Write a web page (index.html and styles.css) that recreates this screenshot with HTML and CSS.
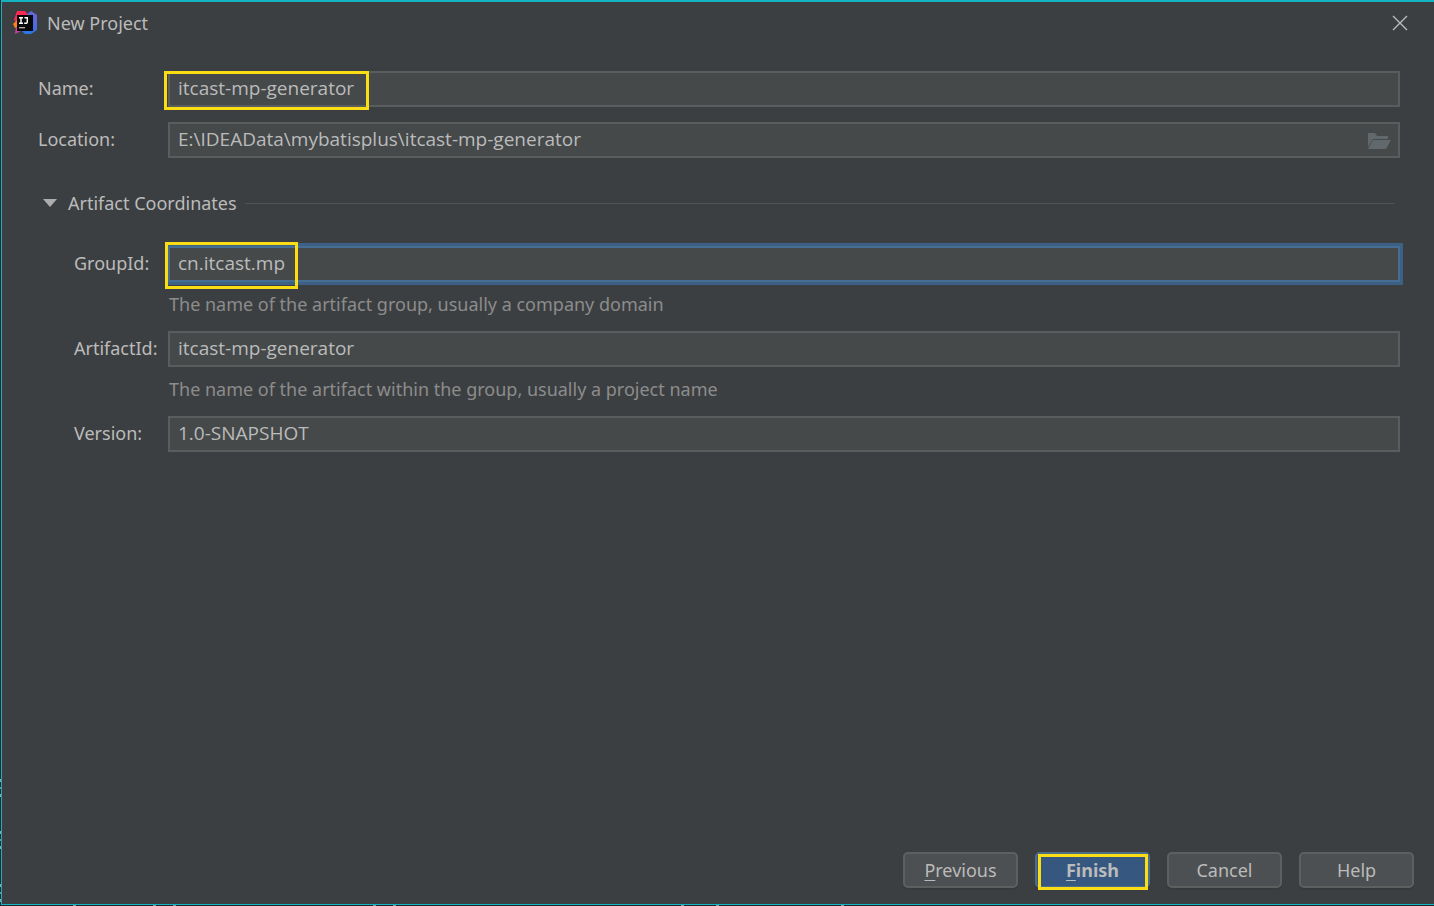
FILE: index.html
```html
<!DOCTYPE html>
<html lang="en">
<head>
<meta charset="utf-8">
<title>New Project</title>
<link rel="stylesheet" href="styles.css">
</head>
<body>
<main class="dialog">
  <header class="titlebar">
    <svg class="logo" viewBox="0 0 24 24" aria-hidden="true">
      <defs>
        <linearGradient id="blue" x1="0" y1="1" x2="1" y2="0"><stop offset="0" stop-color="#1b7fe8"/><stop offset="0.5" stop-color="#3b6fe6"/><stop offset="1" stop-color="#7b62d3"/></linearGradient>
        <linearGradient id="purple" x1="0" y1="0" x2="1" y2="1"><stop offset="0" stop-color="#f0407a"/><stop offset="1" stop-color="#8b3fd8"/></linearGradient>
      </defs>
      <path fill="url(#blue)" d="M14 3 18 0 24 4V19L18 23H12L9 20V8Z"/>
      <path fill="#fe2857" d="M4 0H12L15 4 8 14 1 9Z"/>
      <path fill="#fc801d" d="M0 13 4 9 6 16 2 17Z"/>
      <path fill="url(#purple)" d="M3 16H12L8 20 2 23Z"/>
      <path fill="#080808" d="M4 4H20V20H4Z"/>
      <path stroke="#fff" stroke-width="1.4" fill="none" d="M6 6.7H10M8 6.7V12.3M6 12.3H10M11.5 6.7H14.3V11Q14.3 12.5 12 12.3H11.2"/>
      <path fill="#aaa" d="M6 16H12V17.4H6Z"/>
    </svg>
    <h1 class="title">New Project</h1>
    <button class="close" type="button" aria-label="Close">
      <svg viewBox="0 0 16 16" aria-hidden="true"><path d="M1 1 15 15M15 1 1 15"/></svg>
    </button>
  </header>
  <form class="form">
    <div class="row">
      <label class="label" for="name">Name:</label>
      <div class="field"><input class="input" id="name" type="text" value="itcast-mp-generator"><span class="mark mark-name"></span></div>
    </div>
    <div class="row">
      <label class="label" for="location">Location:</label>
      <div class="field">
        <input class="input input-browse" id="location" type="text" value="E:\IDEAData\mybatisplus\itcast-mp-generator">
        <button class="browse" type="button" aria-label="Browse">
          <svg viewBox="0 0 24 18" aria-hidden="true"><path d="M1 15V1H8L10 4H21V7H6Z"/><path d="M6 8H24L19 17H1Z"/></svg>
        </button>
      </div>
    </div>
    <div class="group" role="group" aria-labelledby="section-title">
      <button class="section" type="button" aria-expanded="true">
        <svg class="arrow" viewBox="0 0 14 8" aria-hidden="true"><path d="M0 0H14L7 8Z"/></svg>
        <span id="section-title">Artifact Coordinates</span>
        <span class="rule"></span>
      </button>
      <div class="row nested">
        <label class="label" for="group">GroupId:</label>
        <div class="field"><input class="input focused" id="group" type="text" value="cn.itcast.mp" aria-describedby="group-hint"><span class="mark mark-group"></span></div>
      </div>
      <p class="hint" id="group-hint">The name of the artifact group, usually a company domain</p>
      <div class="row nested">
        <label class="label" for="artifact">ArtifactId:</label>
        <div class="field"><input class="input" id="artifact" type="text" value="itcast-mp-generator" aria-describedby="artifact-hint"></div>
      </div>
      <p class="hint" id="artifact-hint">The name of the artifact within the group, usually a project name</p>
      <div class="row nested">
        <label class="label" for="version">Version:</label>
        <div class="field"><input class="input" id="version" type="text" value="1.0-SNAPSHOT"></div>
      </div>
    </div>
  </form>
  <footer class="actions">
    <button class="button" type="button"><u>P</u>revious</button>
    <button class="button primary" type="button"><u>F</u>inish<span class="mark mark-finish"></span></button>
    <button class="button" type="button">Cancel</button>
    <button class="button" type="button">Help</button>
  </footer>
</main>
</body>
</html>
```
FILE: styles.css
```css
* { box-sizing: border-box; }

body {
  /* slivers of the editor text behind the dialog's left edge */
  --sliver: linear-gradient(#a0a0a0 3px, transparent 3px 8px, #8a8a8a 8px 10px, transparent 10px 15px, #a0a0a0 15px);
  --dot: linear-gradient(#7f9a9c, #7f9a9c);
  margin: 0;
  padding: 0 0 1px 1px;
  min-height: 100vh;
  display: flex;
  background:
    var(--sliver) 0 calc(100% - 4px) / 1px 18px no-repeat,
    var(--sliver) 0 calc(100% - 57px) / 1px 18px no-repeat,
    var(--sliver) 0 calc(100% - 109px) / 1px 18px no-repeat,
    var(--dot) 73px 100% / 3px 1px no-repeat,
    var(--dot) 153px 100% / 3px 1px no-repeat,
    var(--dot) 173px 100% / 3px 1px no-repeat,
    var(--dot) 373px 100% / 3px 1px no-repeat,
    var(--dot) 393px 100% / 3px 1px no-repeat,
    var(--dot) 681px 100% / 3px 1px no-repeat,
    var(--dot) 716px 100% / 3px 1px no-repeat,
    var(--dot) 841px 100% / 3px 1px no-repeat,
    #222628;
  color: #bbbbbb;
  font: 18px/24px "Noto Sans", "Open Sans", sans-serif;
}

button, input { font: inherit; color: inherit; }

button { padding: 0; border: 0; background: none; }

svg { display: block; }

.dialog {
  flex: 1;
  display: flex;
  flex-direction: column;
  background: #3c3f41;
  border: solid #13b3c1;
  border-width: 2px 0 1px 1px;
}

.titlebar {
  display: flex;
  align-items: center;
  height: 42px;
  padding: 0 26px 0 11px;
}

.logo { width: 24px; height: 24px; }

.title { flex: 1; margin: 0 0 0 10px; font-size: 18px; font-weight: 400; }

.close svg { width: 16px; height: 16px; stroke: #bbbbbb; stroke-width: 1.4; fill: none; }

.form { padding: 27px 34px 0 36px; }

.row { display: flex; align-items: center; margin-bottom: 15px; }

.label { flex: none; width: 130px; padding-bottom: 2px; }

.field { position: relative; flex: 1; display: flex; }

.input {
  width: 100%;
  height: 36px;
  padding: 0 8px 2px;
  border: 2px solid #5a5d5e;
  border-radius: 0;
  outline: 0;
  background: #45494a;
  font-family: "Open Sans", "Noto Sans", sans-serif;
  font-size: 19px;
}

.input-browse { padding-right: 40px; }

.input.focused { border-color: #466d94; box-shadow: 0 0 0 3px #3d6185; }

.browse { position: absolute; right: 9px; top: 10px; }

.browse svg { width: 24px; height: 18px; fill: #62696c; }

.group { padding-top: 18px; }

.section {
  display: flex;
  align-items: center;
  width: 100%;
  height: 24px;
  padding: 0 6px 0 5px;
  margin-bottom: 31px;
}

.arrow { width: 14px; height: 8px; margin-right: 11px; fill: #adadad; }

.rule { flex: 1; height: 1px; margin-left: 8px; background: #515354; }

.nested { margin: 0 0 10px; padding-left: 36px; }

.nested .label { width: 94px; }

.hint { margin: 0 0 15px 131px; color: #8c8c8c; }

.actions {
  display: flex;
  justify-content: flex-end;
  gap: 17px;
  margin-top: auto;
  padding: 0 20px 16px;
}

.button {
  position: relative;
  width: 115px;
  height: 36px;
  border: 2px solid #5e6060;
  border-radius: 5px;
  background: #4c5052;
  box-shadow: 0 2px 0 #37393b;
}

.button u { text-underline-offset: 3px; text-decoration-thickness: 1px; }

.primary { border-color: #4c708c; background: #365880; font-weight: 700; }

.mark { position: absolute; border: 3px solid #fbdd16; pointer-events: none; }

.mark-name { left: -4px; top: 0; width: 205px; height: 39px; }

.mark-group { left: -3px; top: -4px; width: 133px; height: 47px; }

.mark-finish { inset: 0 0 -4px 1px; }
```
